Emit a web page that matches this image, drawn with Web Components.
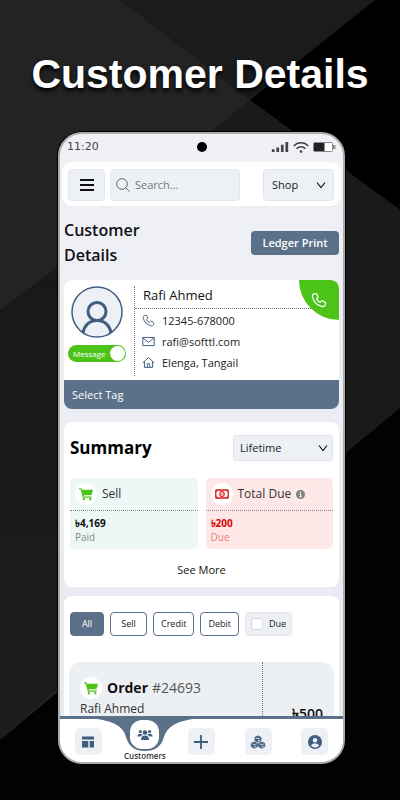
<!DOCTYPE html>
<html lang="en">
<head>
<meta charset="UTF-8">
<meta name="viewport" content="width=device-width, initial-scale=1.0">
<title>Customer Details</title>
<style>
  :root {
    --slate: #5b7089;
    --slate-dark: #3f5d7e;
    --panel: #edf0f5;
    --green: #4cc417;
    --red: #e01414;
  }
  body {
    margin: 0;
    background: #000;
    color: #111;
    font-family: "Open Sans", "Noto Sans", "DejaVu Sans", sans-serif;
  }
</style>
</head>
<body>

<promo-stage>
  <span slot="title">Customer Details</span>
  <phone-frame>
    <status-bar slot="top" time="11:20"></status-bar>
    <top-bar slot="top"></top-bar>

    <page-heading action="Ledger Print">Customer Details</page-heading>

    <customer-card>
      <span slot="name">Rafi Ahmed</span>
      <contact-row icon="phone">12345-678000</contact-row>
      <contact-row icon="mail">rafi@softtl.com</contact-row>
      <contact-row icon="home">Elenga, Tangail</contact-row>
      <span slot="tag">Select Tag</span>
    </customer-card>

    <summary-card>
      <stat-tile icon="cart" label="Sell" amount="৳4,169" note="Paid"></stat-tile>
      <stat-tile class="due" icon="cash" label="Total Due" amount="৳200" note="Due" info></stat-tile>
    </summary-card>

    <order-list>
      <order-card number="#24693" amount="৳500">Rafi Ahmed</order-card>
    </order-list>

    <bottom-nav slot="nav">
      <nav-item icon="dashboard" label="Dashboard"></nav-item>
      <nav-item icon="people" label="Customers" active>Customers</nav-item>
      <nav-item icon="plus" label="Add"></nav-item>
      <nav-item icon="boxes" label="Products"></nav-item>
      <nav-item icon="user" label="Account"></nav-item>
    </bottom-nav>
  </phone-frame>
</promo-stage>

<script>
// --- Icons ---

const icons = {
  menu: ['0 0 14 12', '<path d="M0 1h14M0 6h14M0 11h14" stroke="currentColor" stroke-width="2"/>'],
  search: ['0 0 14 14', '<g fill="none" stroke="currentColor"><circle cx="6" cy="6" r="5.3"/><path d="M9.8 9.8l3.7 3.7"/></g>'],
  chevron: ['0 0 10 10', '<path d="M1 2.5l4 5 4-5" fill="none" stroke="currentColor" stroke-width="1.2"/>'],
  phone: ['0 0 16 16', '<path d="M4.9 1.6L3 1.9C1.6 2.4 1.2 3.8 1.6 5.4c1.1 4.3 4.7 7.9 9 9 1.7.4 3-.1 3.5-1.4l.4-1.6c.1-.6-.1-1-.6-1.3l-2.5-1.2c-.5-.2-1-.1-1.3.3l-.9 1.1C7.4 9.6 6.4 8.6 5.7 6.9l1-.9c.4-.3.5-.8.3-1.3L5.900 2.200c-.2-.5-.5-.7-1-.6z" fill="none" stroke="currentColor" stroke-width="1.2"/>'],
  mail: ['0 0 16 16', '<g fill="none" stroke="currentColor" stroke-width="1.2"><path d="M1 3h14v10H1z"/><path d="M1 3.5l7 5.5 7-5.5"/></g>'],
  home: ['0 0 16 16', '<g fill="none" stroke="currentColor" stroke-width="1.2"><path d="M1 8.3L8 2l7 6.3"/><path d="M3 6.8V14h10V6.800"/><path d="M6.500 14v-4.500h3V14"/></g>'],
  person: ['0 0 52 52', '<circle cx="26" cy="26" r="25" fill="#edf0f5" stroke="currentColor" stroke-width="1.5"/><g fill="none" stroke="currentColor" stroke-width="3"><circle cx="26" cy="25.5" r="9"/><path d="M12 47c1-7 6-12.500 14-12.500S39 40 40 47"/></g>'],
  cart: ['0 0 16 16', '<path d="M0 1.500h2.700l.6 1.700H16l-1.700 6.300H5.300l.4 1.300h8.800V12.200H4.500L1.900 2.900H0z" fill="currentColor"/><circle cx="5.600" cy="14" r="1.300" fill="currentColor"/><circle cx="12.900" cy="14" r="1.300" fill="currentColor"/>'],
  cash: ['0 0 16 16', '<rect x=".9" y="3.400" width="14.200" height="9.200" rx="1" fill="none" stroke="currentColor" stroke-width="1.500"/><ellipse cx="8" cy="8" rx="2.500" ry="2.800" fill="none" stroke="currentColor" stroke-width="1.300"/><path d="M8 6.700v2.600" stroke="currentColor"/><path d="M1 3.400h2.700L1 6.100zM15 3.400h-2.700L15 6.100zM1 12.600h2.700L1 9.900zM15 12.600h-2.700L15 9.900z" fill="currentColor"/>'],
  info: ['0 0 10 10', '<circle cx="5" cy="5" r="5" fill="#808080"/><path d="M5 2v1.400M4 4.500h1.200v3M3.700 7.500h2.700" stroke="#fff" stroke-width="1.200" fill="none"/>'],
  dashboard: ['0 0 14 14', '<path d="M1 1.500h12v3H1zM1 6h6.300v6.500H1zM8.700 6H13v6.500H8.700z" fill="currentColor"/>'],
  people: ['0 0 18 14', '<g fill="currentColor"><circle cx="9" cy="4.200" r="2.600"/><path d="M4.500 12.700c0-3.600 1.700-5 4.500-5s4.500 1.400 4.500 5z"/><circle cx="3.800" cy="3" r="1.700"/><circle cx="14.200" cy="3" r="1.700"/><path d="M.5 8.800C.5 6.500 1.700 5.600 4 5.600l1.500.3L6.700 7C4.900 7.500 4.300 8 4 8.800zM17.500 8.800c0-2.300-1.200-3.200-3.500-3.200l-1.500.3L11.300 7c1.800.5 2.400 1 2.700 1.800z"/></g>'],
  plus: ['0 0 14 14', '<path d="M7 0v14M0 7h14" stroke="currentColor" stroke-width="1.800"/>'],
  boxes: ['0 0 18 16', '<g fill="currentColor" stroke="currentColor" stroke-linejoin="round"><path d="M9 1l3.400 1.600v3.800L9 8 5.600 6.400V2.600z"/><path d="M4.800 8l3.500 1.600v3.600L4.800 15l-3.500-1.800V9.600zM13.200 8l3.500 1.600v3.600L13.200 15l-3.500-1.800V9.600z"/></g><path d="M6.500 3.200L9 4.200l2.500-1M9.600 5.200v1.700l1.500-.7M2.300 10.100l2.500 1.100 2.500-1.100M5.400 12.200v1.700l1.600-.8M10.700 10.100l2.500 1.100 2.500-1.100M13.800 12.200v1.700l1.600-.8" fill="none" stroke="#edf0f5" stroke-width=".9"/>'],
  user: ['0 0 16 16', '<circle cx="8" cy="8" r="8" fill="currentColor"/><circle cx="8" cy="5.900" r="2.600" fill="#edf0f5"/><path d="M3.200 12.100c1-1.800 2.600-2.500 4.800-2.500s3.800.7 4.800 2.500C11.500 13.500 10 14.200 8 14.200s-3.500-.7-4.800-2.100z" fill="#edf0f5"/>'],
  signal: ['0 0 18 11', '<path d="M0 8h3v3H0zM5 6h3v5H5zM10 3h3v8h-3zM15 0h3v11h-3z" fill="currentColor"/>'],
  wifi: ['0 0 16 11', '<g fill="none" stroke="currentColor" stroke-width="1.500"><path d="M.7 4C4.800-.2 11.200-.2 15.300 4"/><path d="M3.500 6.800c2.600-2.600 6.400-2.600 9 0"/></g><circle cx="8" cy="9.600" r="1.300" fill="currentColor"/>'],
  battery: ['0 0 23 10', '<rect x=".5" y=".5" width="19" height="9" rx="1" fill="#fff" stroke="#888"/><path d="M1 1h10.500v8H1z" fill="#222"/><path d="M20.500 3.500h1.500v3h-1.500z" fill="#fff" stroke="#777"/>']
};

// Registers an element whose shadow root is made from its styles and markup
function define(tag, styles, markup) {
  customElements.define(tag, class extends HTMLElement {
    connectedCallback() {
      if (this.shadowRoot) return;
      const template = document.createElement('template');
      const html = typeof markup === 'function' ? markup(this) : markup;
      template.innerHTML = `<style>* { box-sizing: border-box; } ${styles}</style>${html}`;
      this.attachShadow({ mode: 'open' }).appendChild(template.content.cloneNode(true));
    }
  });
}

define('ui-icon', `
  :host { display: inline-flex; flex: none; width: 14px; height: 14px; }
  svg { width: 100%; height: 100%; display: block; }
`, el => {
  const [box, shape] = icons[el.getAttribute('name')];
  return `<svg viewBox="${box}" aria-hidden="true">${shape}</svg>`;
});

// --- Stage and phone ---

define('promo-stage', `
  :host {
    display: flex;
    flex-direction: column;
    position: relative;
    height: 100vh;
    min-height: 600px;
    box-sizing: border-box;
    padding: 0 55px 36px 58px;
    overflow: hidden;
  }
  .backdrop { position: absolute; inset: 0; width: 100%; height: 100%; }
  h1 {
    position: relative;
    margin: 0 -55px 0 -58px;
    padding-top: 50px;
    height: 132px;
    font: bold 41px/48px "Liberation Sans", Arial, sans-serif;
    color: #fff;
    text-align: center;
    white-space: nowrap;
    text-shadow: 0 3px 4px #000;
  }
  ::slotted(phone-frame) { flex: 1; min-height: 0; }
`, `
  <svg class="backdrop" viewBox="0 0 400 800" preserveAspectRatio="none" aria-hidden="true">
    <defs>
      <linearGradient id="low" x1="0" y1="0" x2="0" y2="1">
        <stop offset="0" stop-color="#171717"/><stop offset="1" stop-color="#1d1d1d"/>
      </linearGradient>
    </defs>
    <path d="M0 0h400v800H0z" fill="#232323"/>
    <path d="M120 0h255L250 100z" fill="#1b1b1b"/>
    <path d="M375 0h25v210L250 100z" fill="#000"/>
    <path d="M250 100l150 110v198L200 590V140z" fill="#1a1a1a"/>
    <path d="M0 310l200-150v400L0 740z" fill="url(#low)"/>
    <path d="M0 740l400-332v392H0z" fill="#020202"/>
  </svg>
  <h1><slot name="title"></slot></h1>
  <slot></slot>
`);

define('phone-frame', `
  :host {
    display: flex;
    flex-direction: column;
    position: relative;
    box-sizing: border-box;
    border: 2px solid #acacac;
    border-radius: 24px;
    background: linear-gradient(#eff1f7, #e6e9ef);
    box-shadow: 0 0 0 1px #000;
    overflow: hidden;
  }
  main {
    flex: 1;
    min-height: 0;
    overflow: hidden;
    padding: 12px 4px 0;
  }
`, `
  <slot name="top"></slot>
  <main><slot></slot></main>
  <slot name="nav"></slot>
`);

define('status-bar', `
  :host {
    display: grid;
    grid-template-columns: 1fr auto 1fr;
    align-items: center;
    height: 26px;
    padding: 0 7px;
    color: #444;
    font: 11px/16px "DejaVu Sans", sans-serif;
  }
  .camera { width: 10px; height: 10px; border-radius: 50%; background: #000; }
  .right { display: flex; justify-content: flex-end; align-items: center; gap: 4px; }
  .signal { width: 18px; height: 10px; }
  .wifi { width: 16px; height: 11px; }
  .battery { width: 23px; height: 10px; }
`, el => `
  <span>${el.getAttribute('time')}</span>
  <span class="camera"></span>
  <span class="right">
    <ui-icon class="signal" name="signal"></ui-icon>
    <ui-icon class="wifi" name="wifi"></ui-icon>
    <ui-icon class="battery" name="battery"></ui-icon>
  </span>
`);

// --- Controls ---

define('select-box', `
  :host { display: grid; align-items: center; }
  select, ui-icon { grid-area: 1 / 1; }
  select {
    appearance: none;
    width: 100%;
    height: 100%;
    margin: 0;
    padding: 0 20px 0 6px;
    border: 1px solid #e1e5eb;
    border-radius: 4px;
    background: var(--panel);
    color: #222;
    font: 11px/16px "Open Sans", "Noto Sans", sans-serif;
  }
  ui-icon { width: 10px; height: 10px; justify-self: end; margin-right: 5px; pointer-events: none; }
  :host([roomy]) select { padding-left: 8px; }
  :host([roomy]) ui-icon { margin-right: 8px; }
`, el => `
  <select aria-label="${el.getAttribute('label')}"><option>${el.getAttribute('value')}</option></select>
  <ui-icon name="chevron"></ui-icon>
`);

define('top-bar', `
  :host {
    display: flex;
    gap: 5px;
    margin: 2px 2px 0;
    padding: 7px 7px 5px 6px;
    border-radius: 10px;
    background: #fff;
  }
  button, .search {
    height: 32px;
    border: 1px solid #e4e8ee;
    border-radius: 4px;
    background: var(--panel);
  }
  button { width: 37px; padding: 0; display: grid; place-items: center; color: #111; }
  button ui-icon { height: 12px; }
  .search {
    flex: 1;
    min-width: 0;
    display: flex;
    align-items: center;
    gap: 5px;
    padding: 0 5px;
    color: #666;
  }
  input {
    flex: 1;
    min-width: 0;
    padding: 0;
    border: 0;
    outline: 0;
    background: none;
    font: 11px/16px "Open Sans", "Noto Sans", sans-serif;
  }
  input::placeholder { color: #777; }
  select-box { width: 71px; margin-left: 18px; }
`, `
  <button type="button" aria-label="Menu"><ui-icon name="menu"></ui-icon></button>
  <label class="search"><ui-icon name="search"></ui-icon><input type="text" aria-label="Search" placeholder="Search..."></label>
  <select-box roomy label="Shop" value="Shop"></select-box>
`);

define('page-heading', `
  :host { display: flex; align-items: center; justify-content: space-between; }
  h2 { margin: 0; width: 100px; font-size: 16px; line-height: 25px; font-weight: 600; color: #111; }
  button {
    height: 24px;
    width: 88px;
    padding: 0;
    border: 0;
    border-radius: 4px;
    background: var(--slate);
    color: #fff;
    font: 600 11px/16px "Open Sans", "Noto Sans", sans-serif;
  }
`, el => `
  <h2><slot></slot></h2>
  <button type="button">${el.getAttribute('action')}</button>
`);

// --- Customer ---

define('customer-card', `
  :host {
    display: block;
    position: relative;
    margin-top: 12px;
    border-radius: 8px;
    background: #fff;
    overflow: hidden;
  }
  .body { display: flex; padding: 6px 0 4px 4px; }
  .left { width: 66px; display: flex; flex-direction: column; align-items: flex-start; gap: 7px; }
  .avatar { width: 52px; height: 52px; margin-left: 3px; color: var(--slate-dark); }
  .switch {
    display: flex;
    align-items: center;
    width: 58px;
    height: 17px;
    padding: 0 1px 0 5px;
    justify-content: space-between;
    border-radius: 9px;
    background: var(--green);
    color: #fff;
    font-size: 8px;
    line-height: 12px;
  }
  .switch input {
    appearance: none;
    width: 15px;
    height: 15px;
    margin: 0;
    border-radius: 50%;
    background: #fff;
  }
  .right { flex: 1; min-width: 0; border-left: 1px dotted #777; height: 90px; }
  h3 {
    margin: 0;
    padding-left: 8px;
    height: 23px;
    border-bottom: 1px dotted #777;
    font-size: 13px;
    line-height: 18px;
    font-weight: 500;
  }
  .rows { padding: 1px 0 0 7px; }
  .call {
    position: absolute;
    top: 0;
    right: 0;
    width: 40px;
    height: 40px;
    display: grid;
    place-items: center;
    border: 0;
    padding: 0;
    border-radius: 0 8px 0 40px;
    background: var(--green);
    color: #fff;
  }
  .call ui-icon { width: 16px; height: 16px; }
  .tag {
    display: block;
    width: 100%;
    height: 29px;
    padding: 0 8px;
    border: 0;
    background: var(--slate);
    color: #fff;
    text-align: left;
    font: 500 11px/16px "Open Sans", "Noto Sans", sans-serif;
  }
`, `
  <div class="body">
    <div class="left">
      <ui-icon class="avatar" name="person"></ui-icon>
      <label class="switch">Message<input type="checkbox" checked></label>
    </div>
    <div class="right">
      <h3><slot name="name"></slot></h3>
      <div class="rows"><slot></slot></div>
    </div>
  </div>
  <button class="call" type="button" aria-label="Call"><ui-icon name="phone"></ui-icon></button>
  <button class="tag" type="button"><slot name="tag"></slot></button>
`);

define('contact-row', `
  :host { display: flex; align-items: center; gap: 7px; height: 21px; font-size: 11px; line-height: 16px; color: #222; }
  ui-icon { width: 13px; height: 13px; color: var(--slate-dark); }
`, el => `<ui-icon name="${el.getAttribute('icon')}"></ui-icon><span><slot></slot></span>`);

// --- Summary ---

define('summary-card', `
  :host { display: block; margin-top: 13px; padding: 13px 6px 8px; border-radius: 8px; background: #fff; }
  header { display: flex; justify-content: space-between; align-items: center; }
  h2 { margin: 0; font-size: 17px; line-height: 26px; font-weight: 700; color: #000; }
  select-box { width: 100px; height: 26px; }
  .tiles { display: grid; grid-template-columns: 1fr 1fr; gap: 8px; margin: 17px 0 12px; }
  .more {
    display: block;
    margin: 0 auto;
    padding: 0;
    border: 0;
    background: none;
    color: #111;
    font: 11px/18px "Open Sans", "Noto Sans", sans-serif;
  }
`, `
  <header><h2>Summary</h2><select-box label="Period" value="Lifetime"></select-box></header>
  <div class="tiles"><slot></slot></div>
  <button class="more" type="button">See More</button>
`);

define('stat-tile', `
  :host { display: block; border-radius: 5px; background: #edf7f6; color: #111; --icon: var(--green); --note: #888; }
  :host(.due) { background: #fee8e7; --icon: var(--red); --note: #ee7777; }
  header {
    display: flex;
    align-items: center;
    gap: 5px;
    height: 33px;
    padding: 0 5px;
    border-bottom: 1px dotted #888;
    font-size: 12px;
    line-height: 18px;
    color: #333;
  }
  .badge { width: 22px; height: 22px; display: grid; place-items: center; border-radius: 50%; background: #fff; color: var(--icon); }
  .info { width: 9px; height: 9px; }
  .figures { padding: 5px; font-size: 10px; line-height: 14px; }
  strong { display: block; }
  :host(.due) strong { color: #d90404; }
  small { font-size: 10px; color: var(--note); display: block; }
`, el => `
  <header>
    <span class="badge"><ui-icon name="${el.getAttribute('icon')}"></ui-icon></span>
    <span>${el.getAttribute('label')}</span>
    ${el.hasAttribute('info') ? '<ui-icon class="info" name="info"></ui-icon>' : ''}
  </header>
  <div class="figures"><strong>${el.getAttribute('amount')}</strong><small>${el.getAttribute('note')}</small></div>
`);

// --- Orders ---

define('order-list', `
  :host { display: block; margin-top: 9px; padding: 16px 5px 0; border-radius: 8px; background: #fff; }
  .filters { display: flex; gap: 6px; margin: 0 1px 26px; }
  button, label {
    display: flex;
    align-items: center;
    justify-content: center;
    height: 24px;
    padding: 0 7px;
    min-width: 37px;
    border: 1px solid var(--slate);
    border-radius: 4px;
    background: #fff;
    color: #222;
    font: 9px/14px "Open Sans", "Noto Sans", sans-serif;
  }
  button.on { min-width: 34px; background: var(--slate); color: #fff; }
  label { gap: 6px; padding: 0 5px; border-color: #e3e7ed; background: var(--panel); }
  input { appearance: none; width: 12px; height: 12px; margin: 0; border: 1px solid #d5d8dd; border-radius: 3px; background: #fff; }
`, `
  <div class="filters">
    <button type="button" class="on">All</button>
    <button type="button">Sell</button>
    <button type="button">Credit</button>
    <button type="button">Debit</button>
    <label><input type="checkbox">Due</label>
  </div>
  <slot></slot>
`);

define('order-card', `
  :host { display: flex; height: 100px; border-radius: 12px; background: #edf0f3; }
  .info { flex: 1; padding: 14px 0 0 11px; font-size: 12px; line-height: 18px; color: #333; }
  header { display: flex; align-items: center; gap: 4px; height: 24px; font-size: 14px; color: #555; }
  header strong { color: #111; }
  .badge { width: 22px; height: 22px; margin-right: 1px; display: grid; place-items: center; border-radius: 50%; background: #fff; color: var(--green); }
  .total {
    width: 72px;
    padding: 42px 11px 0 0;
    border-left: 1px dotted #777;
    text-align: right;
    font-size: 14px;
    line-height: 20px;
    font-weight: 600;
    color: #111;
  }
`, el => `
  <div class="info">
    <header>
      <span class="badge"><ui-icon name="cart"></ui-icon></span>
      <strong>Order</strong><span>${el.getAttribute('number')}</span>
    </header>
    <slot></slot>
  </div>
  <div class="total">${el.getAttribute('amount')}</div>
`);

// --- Bottom navigation ---

define('bottom-nav', `
  :host { display: block; background: #fff; border-top: 3px solid var(--slate); }
  nav { display: grid; grid-template-columns: repeat(5, 1fr); height: 43px; }
`, '<nav><slot></slot></nav>');

define('nav-item', `
  :host { display: block; position: relative; }
  a {
    display: flex;
    flex-direction: column;
    align-items: center;
    padding-top: 9px;
    color: #333;
    text-decoration: none;
    font-size: 8px;
    line-height: 12px;
    font-weight: 600;
  }
  .tile { width: 27px; height: 27px; display: grid; place-items: center; border-radius: 5px; background: var(--panel); color: var(--slate-dark); }
  .tile ui-icon { width: 16px; }
  .notch { display: none; }
  :host([active]) a { padding-top: 1px; position: relative; gap: 1px; }
  :host([active]) .tile { width: 29px; height: 29px; border-radius: 12px; background: #fff; }
  /* the slate wave hangs below the bar and is wider than its column */
  :host([active]) .notch { display: block; position: absolute; top: -1px; left: 50%; margin-left: -56px; width: 112px; height: 33px; }
`, el => `
  <svg class="notch" viewBox="0 0 112 33" aria-hidden="true"><path d="M0 0C22 2 34 7 37 19C40 29 46 33 56 33S72 29 75 19C79 7 90 2 112 0z" fill="#5b7089"/></svg>
  <a href="#" aria-label="${el.getAttribute('label')}">
    <span class="tile"><ui-icon name="${el.getAttribute('icon')}"></ui-icon></span>
    <slot></slot>
  </a>
`);
</script>
</body>
</html>
